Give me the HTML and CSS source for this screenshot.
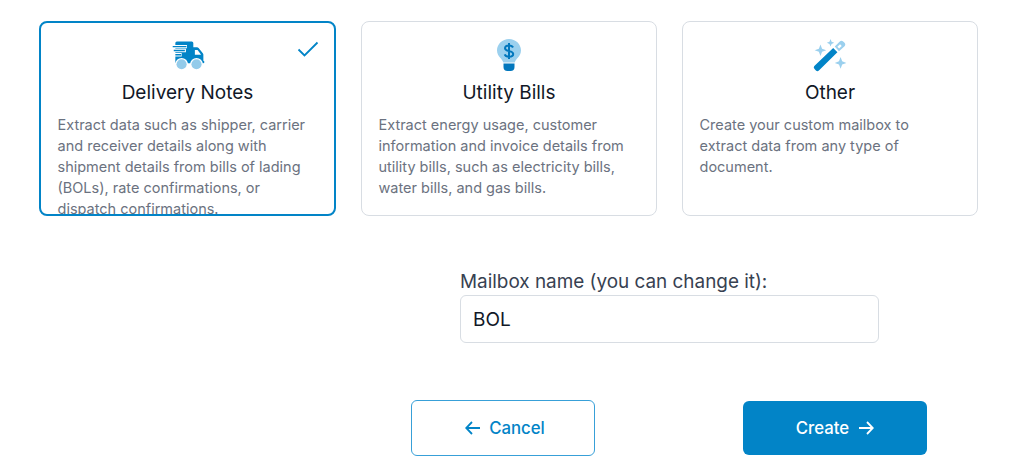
FILE: index.html
```html
<!DOCTYPE html>
<html lang="en">
	<head>
		<meta charset="UTF-8" />
		<meta name="viewport" content="width=device-width, initial-scale=1.0" />
		<title>Create Mailbox</title>
		<link rel="stylesheet" href="styles.css">
	</head>
	<body>
		<main class="mailbox-page">
			<section class="card-list">
				<article class="type-card selected">
					<svg class="card-check" width="22" height="16" viewBox="0 0 22 16" fill="none">
						<path d="M1.5 8.5L7.5 14.5L20.5 1.5" stroke="#0284c7" stroke-width="1.8" />
					</svg>
					<svg class="card-icon" width="37" height="34" viewBox="-1 1 35 28.5">
						<path fill="#0284c7" d="M5 4a1.5 1.5 0 0 1 1.5-1.500h14A1.500 1.500 0 0 1 22 4v4h3.500a2 2 0 0 1 1.500.7l4 4.800a2 2 0 0 1 .5 1.300v6a1.200 1.200 0 0 1 1 1.100a1.200 1.200 0 0 1-1 1.200H6.500A1.500 1.500 0 0 1 5 21.300Z" />
						<path fill="#fff" d="M23.500 10.500H26l3.400 4.500h-5.900Z" />
						<path stroke="#fff" stroke-width="3.2" d="M1 7.300h15M1 11h14M1 15h10" />
						<path stroke="#0284c7" stroke-width="1.300" d="M2.500 7.300h13M3.500 11h10.500M5 15h5.500" />
						<circle fill="#fff" cx="10.900" cy="24" r="6" />
						<circle fill="#fff" cx="25" cy="24" r="6" />
						<circle fill="#93cbea" cx="10.900" cy="24" r="4.800" />
						<circle fill="#93cbea" cx="25" cy="24" r="4.800" />
					</svg>
					<h2 class="card-title">Delivery Notes</h2>
					<p class="card-text">Extract data such as shipper, carrier and receiver details along with shipment details from bills of lading (BOLs), rate confirmations, or dispatch confirmations.</p>
				</article>
				<article class="type-card">
					<svg class="card-icon" width="34" height="34" viewBox="0 0 34 34">
						<path fill="#9bd0ee" d="M17 1C10.400 1 5 6.100 5 12.300c0 3.100 1.400 5.400 3.200 7.500c1.200 1.400 2.600 3 3.100 4.700h11.400c.5-1.700 1.900-3.300 3.100-4.700c1.800-2.100 3.200-4.400 3.200-7.500C29 6.100 23.600 1 17 1Z" />
						<path fill="#0277bd" d="M11.500 25.500h11V29a4 4 0 0 1-4 4h-3a4 4 0 0 1-4-4Z" />
						<path fill="none" stroke="#0277bd" stroke-width="2" d="M21 9.500c-.5-1.200-2-2-4-2c-2.300 0-4 1-4 2.800c0 3.900 8.200 1.800 8.200 5.600c0 1.800-1.800 2.800-4.200 2.800c-2.200 0-3.800-.9-4.300-2.300M17 5v16" />
					</svg>
					<h2 class="card-title">Utility Bills</h2>
					<p class="card-text">Extract energy usage, customer information and invoice details from utility bills, such as electricity bills, water bills, and gas bills.</p>
				</article>
				<article class="type-card">
					<svg class="card-icon" width="36" height="34" viewBox="0 0 34 32">
						<path fill="#0284c7" d="M2.200 26.500L20 9.500l4 4L6.500 30.600a2 2 0 0 1-2.800 0L2.200 29a1.800 1.800 0 0 1 0-2.500Z" />
						<path fill="#9bd0ee" d="M21.500 8L26 3.500a2.600 2.600 0 0 1 3.700 0l.8.800a2.600 2.600 0 0 1 0 3.700L25.500 12.500ZM26.500 5.800l-2.500 2.400l1.600 1.600l2.500-2.400Z" />
						<path fill="#9bd0ee" d="M8 6l1.500 4l4 1.500l-4 1.500L8 17l-1.500-4l-4-1.500l4-1.500ZM17.500 1l1 2.500l2.500 1l-2.500 1l-1 2.500l-1-2.500l-2.500-1l2.500-1ZM27 18l1.500 4l4 1.500l-4 1.500l-1.500 4l-1.500-4l-4-1.500l4-1.500Z" />
					</svg>
					<h2 class="card-title">Other</h2>
					<p class="card-text">Create your custom mailbox to extract data from any type of document.</p>
				</article>
			</section>
			<form class="mailbox-form">
				<label class="mailbox-label" for="mailbox_name">Mailbox name (you can change it):</label>
				<input class="mailbox-input" type="text" id="mailbox_name" name="mailbox_name" value="BOL" />
				<div class="form-actions">
					<button class="action-button cancel-button" type="button">
						<svg width="15" height="14" viewBox="0 0 15 14" fill="none">
							<path d="M7 1L1.200 7L7 13M1.200 7H15" stroke="currentColor" stroke-width="1.800" />
						</svg>
						Cancel
					</button>
					<button class="action-button create-button" type="button">
						Create
						<svg width="16" height="14" viewBox="0 0 16 14" fill="none">
							<path d="M9 1L14.800 7L9 13M14.800 7H1" stroke="currentColor" stroke-width="1.800" />
						</svg>
					</button>
				</div>
			</form>
		</main>
	</body>
</html>
```

FILE: styles.css
```css
* {
	box-sizing: border-box;
}

body {
	margin: 0;
	background-color: #fff;
	font-family: Inter, "Liberation Sans", sans-serif;
}

.mailbox-page {
	height: 466px;
	padding: 21px 46px 0 39px;
	overflow: hidden;
}

.card-list {
	display: grid;
	grid-template-columns: 297px 296px 296px;
	gap: 25px;
}

.type-card {
	position: relative;
	height: 195px;
	padding: 16px 16.5px 0;
	border: 1px solid #d8dde3;
	border-radius: 8px;
	overflow: hidden;
	text-align: center;
}
.type-card.selected {
	border: 2px solid #0284c7;
	padding: 15px 16.5px 0;
}

.card-icon {
	display: block;
	height: 34px;
	margin: 0 auto;
}

.card-check {
	position: absolute;
	top: 18px;
	right: 15px;
}

.card-title {
	margin: 7px 0 0;
	color: #111827;
	font-size: 19px;
	font-weight: 400;
	line-height: 28px;
}

.card-text {
	margin: 7px 0 0;
	padding-right: 5px;
	color: #6b7280;
	font-size: 14.5px;
	line-height: 21px;
	text-align: left;
}

.mailbox-form {
	display: flex;
	flex-direction: column;
	align-items: flex-start;
	width: 516px;
	margin: 52px 0 0 372px;
}

.mailbox-label {
	margin-left: 49px;
	color: #374151;
	font-size: 18.9px;
	line-height: 27px;
}

.mailbox-input {
	width: 419px;
	height: 48px;
	margin: 0 0 0 49px;
	padding: 0 12px;
	border: 1px solid #d8dde3;
	border-radius: 6px;
	color: #111827;
	font-family: inherit;
	font-size: 19px;
	outline: none;
}

.form-actions {
	display: flex;
	justify-content: space-between;
	align-items: center;
	width: 100%;
	margin-top: 57px;
}

.action-button {
	display: flex;
	justify-content: center;
	align-items: center;
	gap: 9px;
	width: 184px;
	border-radius: 6px;
	font-family: inherit;
	font-size: 16.8px;
	font-weight: 500;
}

.cancel-button {
	height: 56px;
	padding-left: 10px;
	border: 1px solid #38a0d8;
	background-color: #fff;
	color: #0284c7;
}

.create-button {
	height: 54px;
	border: none;
	background-color: #0284c7;
	color: #fff;
}
```
